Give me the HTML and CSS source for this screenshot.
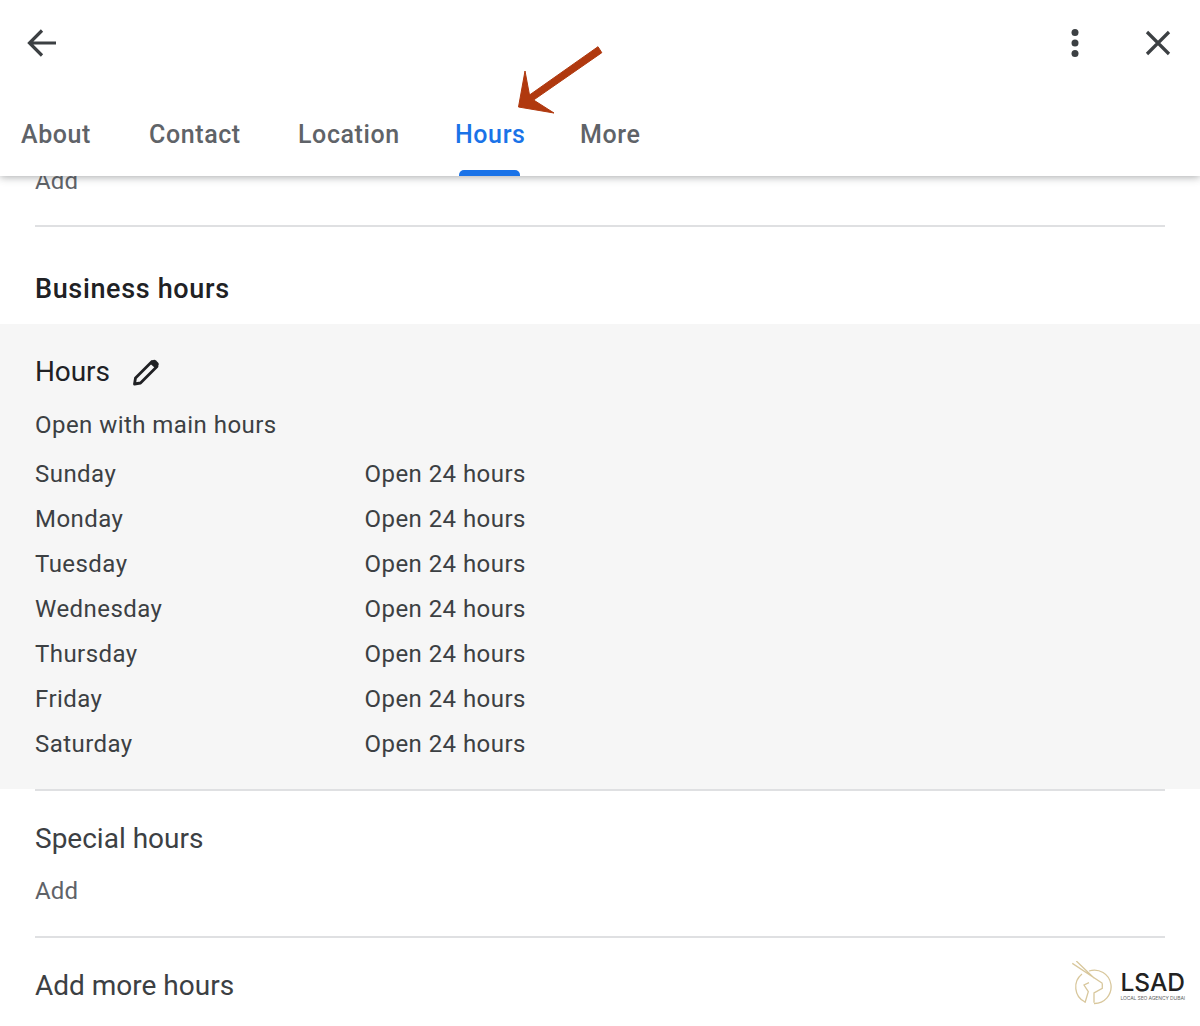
FILE: index.html
```html
<!DOCTYPE html>
<html lang="en">
<head>
<meta charset="utf-8">
<title>Hours</title>
<link rel="stylesheet" href="styles.css">
</head>
<body>
<div class="page">
  <header class="header">
    <div class="toolbar">
      <svg class="icon-back" width="32" height="32" viewBox="0 0 32 32"><path d="M30 16H4.500M16 3.500 3.500 16 16 28.500" fill="none" stroke="#3c4043" stroke-width="3.200"/></svg>
      <div class="toolbar-right">
        <svg class="icon-more" width="10" height="30" viewBox="0 0 10 30"><circle cx="5" cy="4.500" r="3.500" fill="#3c4043"/><circle cx="5" cy="15" r="3.500" fill="#3c4043"/><circle cx="5" cy="25.500" r="3.500" fill="#3c4043"/></svg>
        <svg class="icon-close" width="26" height="26" viewBox="0 0 26 26"><path d="M2 2 24 24M24 2 2 24" fill="none" stroke="#3c4043" stroke-width="3.200"/></svg>
      </div>
    </div>
    <nav class="tabs">
      <a class="tab">About</a>
      <a class="tab">Contact</a>
      <a class="tab">Location</a>
      <a class="tab tab-active">Hours</a>
      <a class="tab">More</a>
    </nav>
    <svg class="arrow" width="90" height="72" viewBox="0 0 90 72"><path d="M82 1.700 85.800 7.700 17.600 55 38 68 2.500 62 9 26 13.500 50Z" fill="#b0390f" stroke="#b0390f" stroke-width="1" stroke-linejoin="round"/></svg>
  </header>
  <main class="content">
    <div class="peek"><span class="add peek-text">Add</span></div>
    <div class="rule"></div>
    <h2 class="section-title">Business hours</h2>
    <section class="hours">
      <div class="hours-head">
        <span class="hours-title">Hours</span>
        <svg class="icon-edit" width="28" height="28" viewBox="0 0 28 28"><path d="M20 3.500 25 8.500 8.500 25 2.500 26 3.500 20Z" fill="none" stroke="#202124" stroke-width="2.800" stroke-linejoin="round"/><path d="M18 5.500 20.500 2.500C21.500 1.500 23 1.500 24 2.500L26 4.500C27 5.500 27 7 26 8L23.500 10.500Z" fill="#202124"/></svg>
      </div>
      <p class="hours-sub">Open with main hours</p>
      <div class="hours-table">
        <span class="cell">Sunday</span><span class="cell">Open 24 hours</span>
        <span class="cell">Monday</span><span class="cell">Open 24 hours</span>
        <span class="cell">Tuesday</span><span class="cell">Open 24 hours</span>
        <span class="cell">Wednesday</span><span class="cell">Open 24 hours</span>
        <span class="cell">Thursday</span><span class="cell">Open 24 hours</span>
        <span class="cell">Friday</span><span class="cell">Open 24 hours</span>
        <span class="cell">Saturday</span><span class="cell">Open 24 hours</span>
      </div>
    </section>
    <div class="rule"></div>
    <div class="special">
      <div class="row-title">Special hours</div>
      <div class="add">Add</div>
    </div>
    <div class="rule"></div>
    <div class="row-title more-hours">Add more hours</div>
  </main>
  <div class="brand">
    <svg class="brand-mark" width="40" height="44" viewBox="0 0 40 44"><g fill="none" stroke="#d8c79c" stroke-width="1.300"><path d="M0.300 2.300 30.300 22.300M4.300 0 22 17"/><path d="M17 10A16.700 16.700 0 1 1 22 42.500"/><path d="M10 13A16.700 16.700 0 0 0 13 41"/><path d="M13 41.700 16.300 30.600 12 24 17 21.700"/><path d="M22 41.700V32L30.300 27.300 30.300 22.300"/></g></svg>
    <div class="brand-text">
      <div class="brand-name">LSAD</div>
      <div class="brand-tag">LOCAL SEO AGENCY DUBAI</div>
    </div>
  </div>
</div>
</body>
</html>
```
FILE: styles.css
```css
* { box-sizing: border-box; }
html, body { margin: 0; padding: 0; background: #fff; }
body { font-family: Roboto, "Liberation Sans", sans-serif; color: #3c4043; }
.page { position: relative; width: 1200px; height: 1026px; overflow: hidden; background: #fff; }

.header { position: relative; z-index: 2; height: 176px; background: #fff; box-shadow: 0 1px 8px rgba(60, 64, 67, 0.45); display: flex; flex-direction: column; }
.toolbar { display: flex; justify-content: space-between; align-items: center; height: 86px; padding: 0 29px 0 26px; }
.toolbar-right { display: flex; align-items: center; gap: 65px; }
.tabs { display: grid; grid-template-columns: 128px 149px 157px 125px auto; padding-left: 21px; height: 90px; }
.tab { position: relative; height: 90px; padding-top: 32px; font-size: 25px; line-height: 34px; font-weight: 500; color: #5f6368; letter-spacing: 0.6px; }
.tab-active { color: #1a73e8; }
.tab-active::after { content: ""; position: absolute; left: 4px; width: 61px; bottom: 0; height: 6px; background: #1a73e8; border-radius: 5px 5px 0 0; }
.arrow { position: absolute; left: 516px; top: 45px; }

.content { padding: 0; }
.peek { height: 49px; padding: 0 35px; overflow: hidden; }
.add { font-size: 24px; line-height: 32px; color: #5f6368; letter-spacing: 0.2px; }
.peek-text { display: block; margin-top: -11px; }
.rule { height: 2px; margin: 0 35px; background: #dfe0e2; }
.section-title { margin: 0; height: 97px; padding: 44px 35px 0; font-size: 27px; line-height: 36px; font-weight: 500; color: #202124; letter-spacing: 0.65px; }
.hours { height: 465px; background: #f6f6f6; padding: 28px 35px 0; }
.hours-head { display: flex; align-items: center; gap: 22px; height: 40px; }
.hours-title { font-size: 28px; line-height: 40px; color: #202124; letter-spacing: -0.1px; }
.hours-sub { margin: 17px 0 0; font-size: 24px; line-height: 32px; letter-spacing: 0.45px; color: #3c4043; }
.hours-table { display: grid; grid-template-columns: 329.500px 1fr; grid-auto-rows: 45px; margin-top: 11px; }
.cell { font-size: 24px; line-height: 45px; letter-spacing: 0.45px; color: #3c4043; }
.special { height: 145px; padding: 28px 35px 0; }
.special .add { margin-top: 16px; }
.row-title { font-size: 28px; line-height: 40px; color: #3c4043; }
.more-hours { margin: 28px 35px 0; }

.brand { position: absolute; right: 15px; top: 961px; display: flex; align-items: flex-start; gap: 8px; }
.brand-text { padding-top: 8px; }
.brand-name { font-family: Inter, "Liberation Sans", sans-serif; font-size: 24.500px; line-height: 26px; font-weight: 500; color: #222; }
.brand-tag { font-family: Inter, sans-serif; font-size: 5px; line-height: 7px; color: #666; white-space: nowrap; letter-spacing: -0.1px; }
```
